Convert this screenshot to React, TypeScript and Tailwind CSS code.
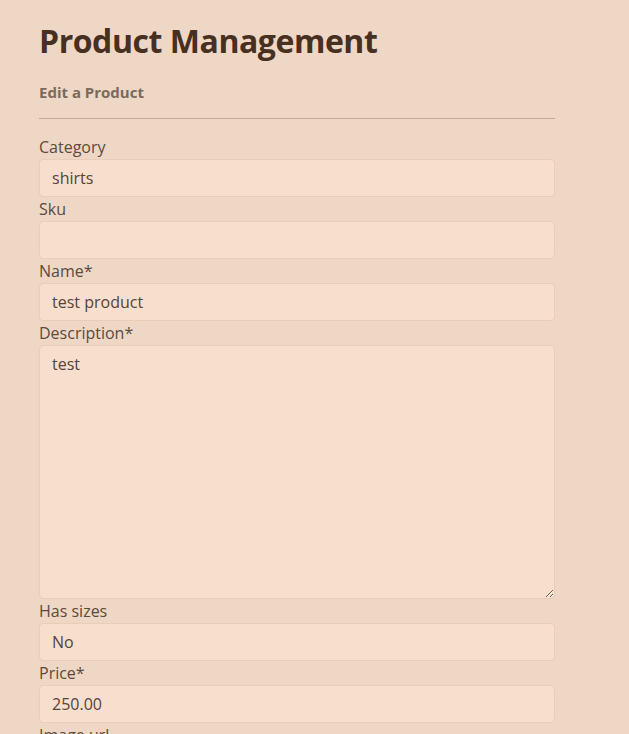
import React from "react";

const inputCls =
  "block w-full h-[38px] rounded-[4px] border border-[#e8cdb9] bg-[#f8dfcd] px-[12px] text-[16px] text-[#54443a] outline-none";
const labelCls = "block h-[24px] leading-[24px] text-[16px] text-[#5c4a3d]";

function Field({ label, value }: { label: string; value: string }) {
  return (
    <div>
      <label className={labelCls}>{label}</label>
      <input className={inputCls} defaultValue={value} />
    </div>
  );
}

export default function App() {
  return (
    <div
      className="min-h-[734px] bg-[#efd7c5] px-[39px] pt-[20px]"
      style={{ fontFamily: "'Open Sans', 'Noto Sans', sans-serif" }}
    >
      <div className="w-[516px]">
        <h1 className="text-[32px] font-bold leading-[42px] text-[#47301f] tracking-[-0.45px]">
          Product Management
        </h1>
        <h2 className="mt-[20px] text-[15px] font-bold leading-[20px] text-[#7b6a5c]">
          Edit a Product
        </h2>
        <div className="mt-[16px] h-px bg-[#c6aa97]" />
        <form className="mt-[16px]">
          <Field label="Category" value="shirts" />
          <Field label="Sku" value="" />
          <Field label="Name*" value="test product" />
          <div>
            <label className={labelCls}>Description*</label>
            <textarea
              className="block w-full h-[254px] rounded-[4px] border border-[#e8cdb9] bg-[#f8dfcd] px-[12px] py-[6px] text-[16px] text-[#54443a] outline-none"
              defaultValue="test"
            />
          </div>
          <Field label="Has sizes" value="No" />
          <Field label="Price*" value="250.00" />
          <Field label="Image url" value="" />
        </form>
      </div>
    </div>
  );
}
